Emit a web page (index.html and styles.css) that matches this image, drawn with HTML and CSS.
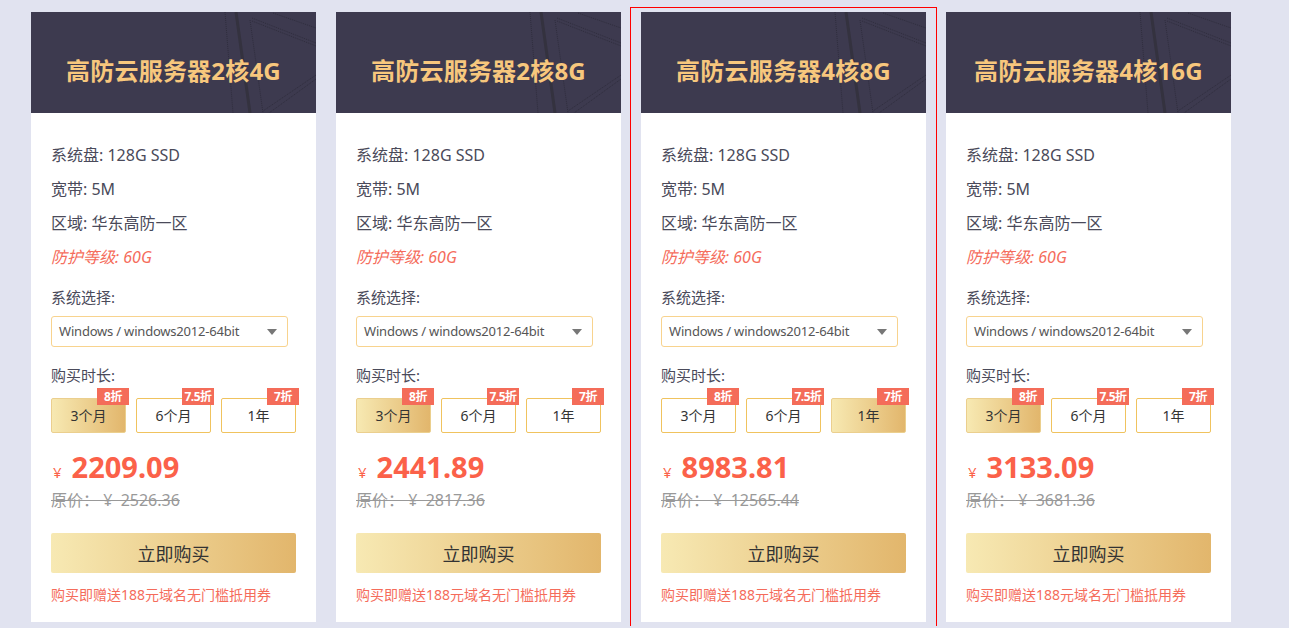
FILE: index.html
```html
<!DOCTYPE html>
<html lang="zh-CN">
<head>
    <meta charset="UTF-8">
    <meta name="viewport" content="width=device-width, initial-scale=1.0">
    <title>高防云服务器</title>
    <link rel="stylesheet" href="styles.css">
</head>
<body>
    <div id="plans">

        <div class="plan-wrap">
            <div class="plan">
                <div class="plan-head">
                    <svg class="head-deco" width="285" height="101" viewBox="0 0 285 101">
                        <line x1="194" y1="0" x2="202" y2="101" class="thin" />
                        <line x1="205" y1="0" x2="219" y2="101" class="thick" />
                        <line x1="219" y1="8" x2="232" y2="101" class="thin" />
                        <polyline points="221,6 285,31" class="thin" />
                        <polyline points="221,9 285,34" class="thin" />
                        <line x1="242" y1="1" x2="285" y2="16" class="thin" />
                        <line x1="285" y1="63" x2="232" y2="99" class="thin" />
                        <line x1="285" y1="67" x2="238" y2="101" class="thin" />
                    </svg>
                    <h2>高防云服务器2核4G</h2>
                </div>
                <div class="plan-body">
                    <p class="spec">系统盘: 128G SSD</p>
                    <p class="spec">宽带: 5M</p>
                    <p class="spec">区域: 华东高防一区</p>
                    <p class="spec guard">防护等级: 60G</p>
                    <p class="label">系统选择:</p>
                    <div class="os-select">Windows / windows2012-64bit<span class="caret"></span></div>
                    <p class="label buy-label">购买时长:</p>
                    <div class="durations">
                        <div class="dur active">3个月<span class="off">8折</span></div>
                        <div class="dur">6个月<span class="off">7.5折</span></div>
                        <div class="dur">1年<span class="off">7折</span></div>
                    </div>
                    <div class="price"><span class="yen">¥</span>2209.09</div>
                    <div class="old-price">原价： ¥&nbsp; 2526.36</div>
                    <button class="buy-btn">立即购买</button>
                    <p class="promo">购买即赠送188元域名无门槛抵用券</p>
                </div>
            </div>
        </div>

        <div class="plan-wrap">
            <div class="plan">
                <div class="plan-head">
                    <svg class="head-deco" width="285" height="101" viewBox="0 0 285 101">
                        <line x1="194" y1="0" x2="202" y2="101" class="thin" />
                        <line x1="205" y1="0" x2="219" y2="101" class="thick" />
                        <line x1="219" y1="8" x2="232" y2="101" class="thin" />
                        <polyline points="221,6 285,31" class="thin" />
                        <polyline points="221,9 285,34" class="thin" />
                        <line x1="242" y1="1" x2="285" y2="16" class="thin" />
                        <line x1="285" y1="63" x2="232" y2="99" class="thin" />
                        <line x1="285" y1="67" x2="238" y2="101" class="thin" />
                    </svg>
                    <h2>高防云服务器2核8G</h2>
                </div>
                <div class="plan-body">
                    <p class="spec">系统盘: 128G SSD</p>
                    <p class="spec">宽带: 5M</p>
                    <p class="spec">区域: 华东高防一区</p>
                    <p class="spec guard">防护等级: 60G</p>
                    <p class="label">系统选择:</p>
                    <div class="os-select">Windows / windows2012-64bit<span class="caret"></span></div>
                    <p class="label buy-label">购买时长:</p>
                    <div class="durations">
                        <div class="dur active">3个月<span class="off">8折</span></div>
                        <div class="dur">6个月<span class="off">7.5折</span></div>
                        <div class="dur">1年<span class="off">7折</span></div>
                    </div>
                    <div class="price"><span class="yen">¥</span>2441.89</div>
                    <div class="old-price">原价： ¥&nbsp; 2817.36</div>
                    <button class="buy-btn">立即购买</button>
                    <p class="promo">购买即赠送188元域名无门槛抵用券</p>
                </div>
            </div>
        </div>

        <div class="plan-wrap hovered">
            <div class="plan">
                <div class="plan-head">
                    <svg class="head-deco" width="285" height="101" viewBox="0 0 285 101">
                        <line x1="194" y1="0" x2="202" y2="101" class="thin" />
                        <line x1="205" y1="0" x2="219" y2="101" class="thick" />
                        <line x1="219" y1="8" x2="232" y2="101" class="thin" />
                        <polyline points="221,6 285,31" class="thin" />
                        <polyline points="221,9 285,34" class="thin" />
                        <line x1="242" y1="1" x2="285" y2="16" class="thin" />
                        <line x1="285" y1="63" x2="232" y2="99" class="thin" />
                        <line x1="285" y1="67" x2="238" y2="101" class="thin" />
                    </svg>
                    <h2>高防云服务器4核8G</h2>
                </div>
                <div class="plan-body">
                    <p class="spec">系统盘: 128G SSD</p>
                    <p class="spec">宽带: 5M</p>
                    <p class="spec">区域: 华东高防一区</p>
                    <p class="spec guard">防护等级: 60G</p>
                    <p class="label">系统选择:</p>
                    <div class="os-select">Windows / windows2012-64bit<span class="caret"></span></div>
                    <p class="label buy-label">购买时长:</p>
                    <div class="durations">
                        <div class="dur">3个月<span class="off">8折</span></div>
                        <div class="dur">6个月<span class="off">7.5折</span></div>
                        <div class="dur active">1年<span class="off">7折</span></div>
                    </div>
                    <div class="price"><span class="yen">¥</span>8983.81</div>
                    <div class="old-price">原价： ¥&nbsp; 12565.44</div>
                    <button class="buy-btn">立即购买</button>
                    <p class="promo">购买即赠送188元域名无门槛抵用券</p>
                </div>
            </div>
        </div>

        <div class="plan-wrap">
            <div class="plan">
                <div class="plan-head">
                    <svg class="head-deco" width="285" height="101" viewBox="0 0 285 101">
                        <line x1="194" y1="0" x2="202" y2="101" class="thin" />
                        <line x1="205" y1="0" x2="219" y2="101" class="thick" />
                        <line x1="219" y1="8" x2="232" y2="101" class="thin" />
                        <polyline points="221,6 285,31" class="thin" />
                        <polyline points="221,9 285,34" class="thin" />
                        <line x1="242" y1="1" x2="285" y2="16" class="thin" />
                        <line x1="285" y1="63" x2="232" y2="99" class="thin" />
                        <line x1="285" y1="67" x2="238" y2="101" class="thin" />
                    </svg>
                    <h2>高防云服务器4核16G</h2>
                </div>
                <div class="plan-body">
                    <p class="spec">系统盘: 128G SSD</p>
                    <p class="spec">宽带: 5M</p>
                    <p class="spec">区域: 华东高防一区</p>
                    <p class="spec guard">防护等级: 60G</p>
                    <p class="label">系统选择:</p>
                    <div class="os-select">Windows / windows2012-64bit<span class="caret"></span></div>
                    <p class="label buy-label">购买时长:</p>
                    <div class="durations">
                        <div class="dur active">3个月<span class="off">8折</span></div>
                        <div class="dur">6个月<span class="off">7.5折</span></div>
                        <div class="dur">1年<span class="off">7折</span></div>
                    </div>
                    <div class="price"><span class="yen">¥</span>3133.09</div>
                    <div class="old-price">原价： ¥&nbsp; 3681.36</div>
                    <button class="buy-btn">立即购买</button>
                    <p class="promo">购买即赠送188元域名无门槛抵用券</p>
                </div>
            </div>
        </div>

    </div>
</body>
</html>
```

FILE: styles.css
```css
body {
    margin: 0;
    background-color: #e1e3f0;
    font-family: "Noto Sans", "Noto Sans CJK SC", sans-serif;
    color: #4a4a5a;
}
p {
    margin: 0;
}
#plans {
    display: flex;
    padding: 8px 0 0 21px;
}
.plan-wrap {
    width: 305px;
    box-sizing: border-box;
    padding: 4px 10px;
}
.plan-wrap.hovered {
    outline: 1px solid #f00;
}
.plan {
    width: 285px;
    height: 610px;
    background-color: #fff;
}
.plan-head {
    position: relative;
    height: 101px;
    box-sizing: border-box;
    padding-top: 13px;
    background-color: #3d3a4f;
    display: flex;
    align-items: center;
    justify-content: center;
    overflow: hidden;
}
.plan-head h2 {
    position: relative;
    margin: 0;
    font-size: 24px;
    font-weight: bold;
    color: #f7c77d;
    letter-spacing: 0.2px;
}
.head-deco {
    position: absolute;
    top: 0;
    left: 0;
}
.head-deco .thin {
    stroke: #2f2d3d;
    stroke-width: 1;
    stroke-dasharray: 1 1;
    fill: none;
}
.head-deco .thick {
    stroke: #34323f;
    stroke-width: 3;
}
.plan-body {
    padding: 25px 20px 0;
}
.spec {
    font-size: 16px;
    line-height: 34px;
}
.guard {
    color: #f56c5b;
    font-style: italic;
}
.label {
    font-size: 15px;
    line-height: 24px;
    margin-top: 11px;
}
.buy-label {
    margin-top: 16px;
}
.os-select {
    position: relative;
    margin-top: 7px;
    width: 237px;
    height: 31px;
    box-sizing: border-box;
    border: 1px solid #f8d38e;
    border-radius: 3px;
    padding-left: 7px;
    font-size: 13px;
    line-height: 29px;
    color: #555;
    letter-spacing: -0.2px;
}
.caret {
    position: absolute;
    right: 10px;
    top: 12px;
    border-left: 5px solid transparent;
    border-right: 5px solid transparent;
    border-top: 6px solid #777;
}
.durations {
    display: flex;
    gap: 10px;
    margin-top: 11px;
}
.dur {
    position: relative;
    width: 75px;
    height: 35px;
    box-sizing: border-box;
    border: 1px solid #f0c35e;
    border-radius: 2px;
    font-size: 14px;
    line-height: 33px;
    text-align: center;
    color: #333;
}
.dur.active {
    border-color: #ebcf8e;
    background: linear-gradient(to right, #f7e9b2, #e2b66c);
}
.off {
    position: absolute;
    top: -11px;
    right: -4px;
    width: 32px;
    height: 17px;
    background-color: #f46c59;
    color: #fff;
    font-size: 12px;
    font-weight: bold;
    line-height: 17px;
    text-align: center;
    letter-spacing: -0.5px;
}
.price {
    margin-top: 17px;
    font-size: 29px;
    font-weight: bold;
    line-height: 34px;
    color: #fb6149;
}
.yen {
    font-size: 15px;
    font-weight: normal;
    margin: 0 10px 0 2px;
}
.old-price {
    margin-top: -1px;
    font-size: 16px;
    line-height: 24px;
    color: #999;
    text-decoration: line-through;
}
.buy-btn {
    display: block;
    width: 245px;
    height: 40px;
    margin-top: 21px;
    border: none;
    border-radius: 2px;
    background: linear-gradient(to right, #f7e9b3, #e2b66c);
    font-family: inherit;
    font-size: 18px;
    color: #333;
    cursor: pointer;
}
.promo {
    margin-top: 12px;
    font-size: 14px;
    line-height: 20px;
    color: #f56c5b;
}
```
